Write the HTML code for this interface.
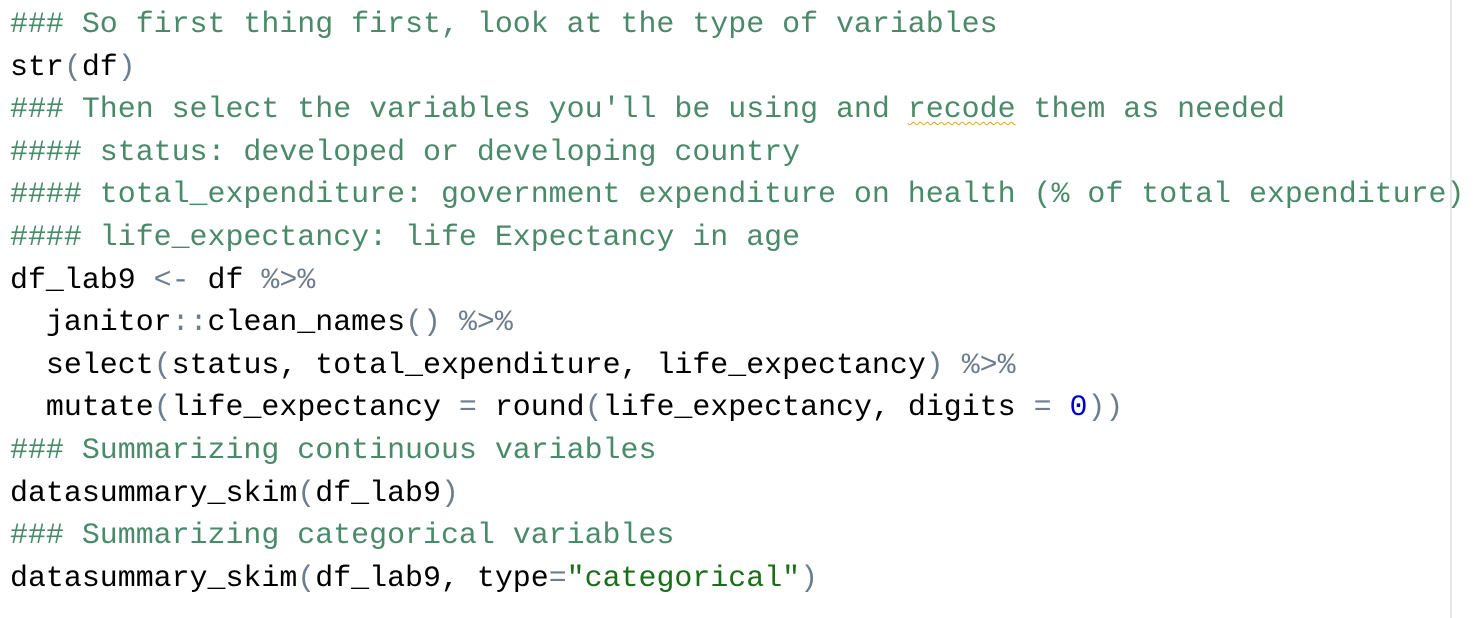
<!DOCTYPE html>
<html><head><meta charset="utf-8"><style>
html,body{margin:0;padding:0;background:#fff;width:1484px;height:618px;overflow:hidden}
.ed{position:absolute;left:10px;top:3px;font-family:"Liberation Mono",monospace;font-size:29.93px;line-height:42.6px;color:#000;white-space:pre}
.c{color:#4a8a6a}.o{color:#6e7d8e}.n{color:#0000cc}.s{color:#1a6e1a}
.sq{text-decoration:underline wavy #e0a030;text-decoration-thickness:1px;text-underline-offset:4px}
.bar{position:absolute;left:1450px;top:0;width:2px;height:618px;background:#e6e6e6}
</style></head><body>
<div class="bar"></div>
<div class="ed"><span class="c">### So first thing first, look at the type of variables</span>
str<span class="o">(</span>df<span class="o">)</span>
<span class="c">### Then select the variables you'll be using and <span class="sq">recode</span> them as needed</span>
<span class="c">#### status: developed or developing country</span>
<span class="c">#### total_expenditure: government expenditure on health (% of total expenditure)</span>
<span class="c">#### life_expectancy: life Expectancy in age</span>
df_lab9 <span class="o">&lt;-</span> df <span class="o">%&gt;%</span>
  janitor<span class="o">::</span>clean_names<span class="o">()</span> <span class="o">%&gt;%</span>
  select<span class="o">(</span>status, total_expenditure, life_expectancy<span class="o">)</span> <span class="o">%&gt;%</span>
  mutate<span class="o">(</span>life_expectancy <span class="o">=</span> round<span class="o">(</span>life_expectancy, digits <span class="o">=</span> <span class="n">0</span><span class="o">))</span>
<span class="c">### Summarizing continuous variables</span>
datasummary_skim<span class="o">(</span>df_lab9<span class="o">)</span>
<span class="c">### Summarizing categorical variables</span>
datasummary_skim<span class="o">(</span>df_lab9, type<span class="o">=</span><span class="s">"categorical"</span><span class="o">)</span></div>
</body></html>
